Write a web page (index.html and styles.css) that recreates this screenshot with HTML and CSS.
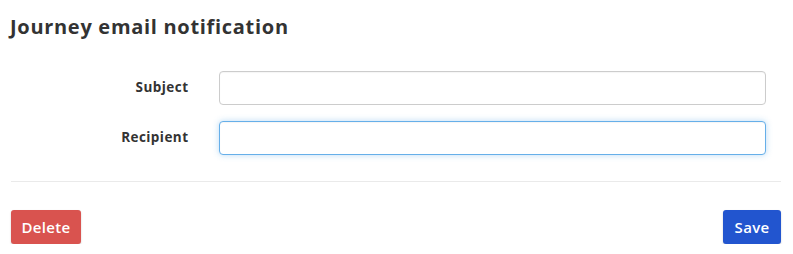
FILE: index.html
```html
<!DOCTYPE html>
<html>
<head>
<meta charset="utf-8">
<link rel="stylesheet" href="styles.css">
</head>
<body>
<div class="panel">
  <h2 class="title">Journey email notification</h2>
  <form class="form">
    <div class="form-row">
      <label class="label" for="subject">Subject</label>
      <div class="field"><input id="subject" class="input" type="text"></div>
    </div>
    <div class="form-row">
      <label class="label" for="recipient">Recipient</label>
      <div class="field"><input id="recipient" class="input input-focus" type="text"></div>
    </div>
  </form>
  <hr class="divider">
  <div class="actions">
    <button class="btn btn-danger" type="button">Delete</button>
    <button class="btn btn-primary" type="button">Save</button>
  </div>
</div>
</body>
</html>
```

FILE: styles.css
```css
html, body {
  margin: 0;
  padding: 0;
  background: #fff;
}
body {
  font-family: "Open Sans", "Liberation Sans", sans-serif;
  color: #333;
}
.panel {
  width: 770px;
  padding: 0 0 0 11px;
}
.title {
  margin: 0 0 0 -1px;
  padding-top: 15px;
  font-size: 20px;
  line-height: 24px;
  font-weight: 700;
  letter-spacing: 0.7px;
  color: #333;
}
.form {
  margin: 32px 0 0 0;
  display: flex;
  flex-direction: column;
  gap: 16px;
}
.form-row {
  display: grid;
  grid-template-columns: 25% 75%;
  align-items: center;
}
.label {
  text-align: right;
  padding-right: 15px;
  font-size: 13.5px;
  line-height: 16px;
  font-weight: 700;
  letter-spacing: 0.45px;
  color: #333;
  position: relative;
  top: -1px;
}
.field {
  padding: 0 15px;
}
.input {
  display: block;
  box-sizing: border-box;
  width: 100%;
  height: 34px;
  margin: 0;
  border: 1px solid #ccc;
  border-radius: 4px;
  background: #fff;
  outline: none;
  box-shadow: inset 0 1px 1px rgba(0,0,0,0.04);
}
.input-focus {
  border-color: #66afe9;
  box-shadow: inset 0 1px 1px rgba(0,0,0,0.04), 0 0 6px rgba(102,175,233,0.45);
}
.divider {
  margin: 26px 0 0 0;
  border: 0;
  border-top: 1px solid #eaeaea;
  height: 0;
}
.actions {
  display: flex;
  justify-content: space-between;
  margin-top: 28px;
}
.btn {
  height: 34px;
  border: 0;
  border-radius: 3px;
  color: #fff;
  font-family: "Open Sans", "Liberation Sans", sans-serif;
  font-size: 15px;
  font-weight: 600;
  padding: 0;
  letter-spacing: 0.3px;
  box-shadow: 0 1px 2px rgba(0,0,0,0.2);
}
.btn-danger {
  background: #d9534f;
  width: 70px;
}
.btn-primary {
  background: #2255cf;
  width: 58px;
}
```
